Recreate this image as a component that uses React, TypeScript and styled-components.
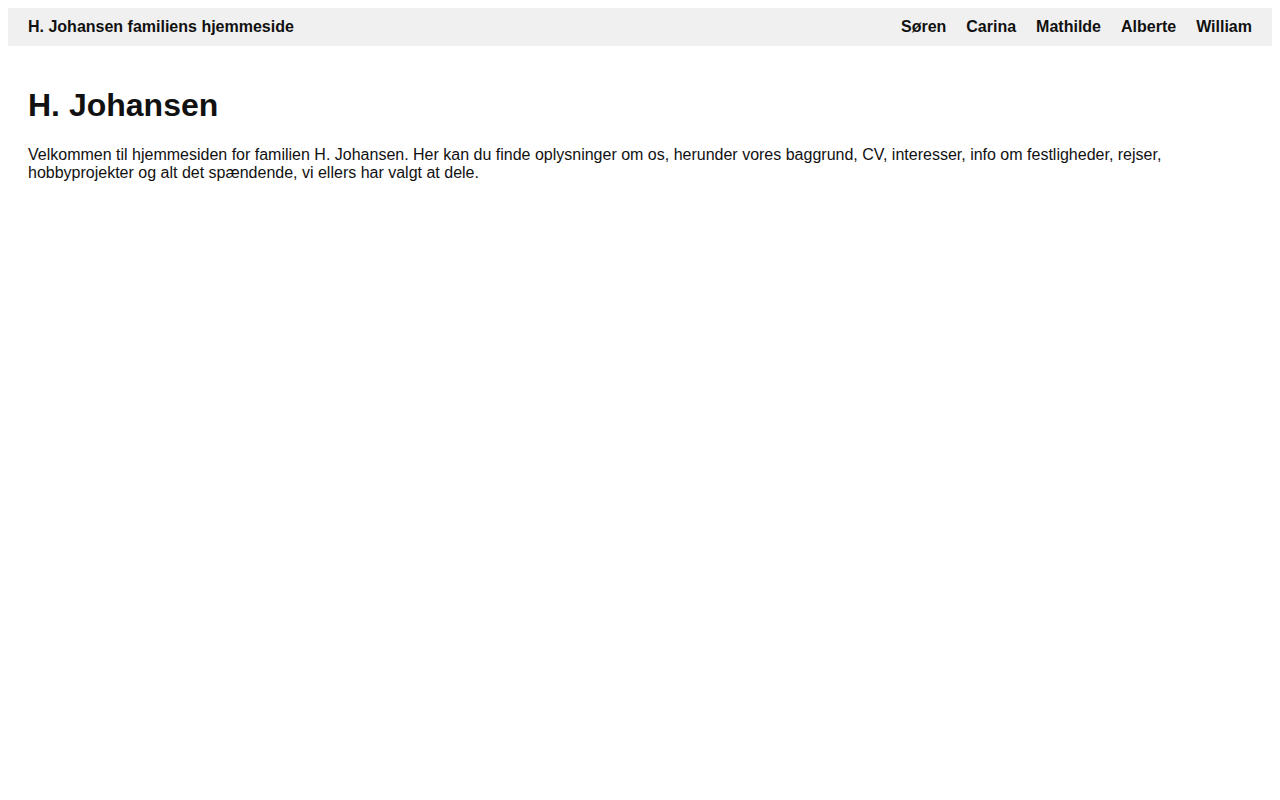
import React from 'react';
import styled, { createGlobalStyle } from 'styled-components';

const GlobalStyle = createGlobalStyle`
  body {
    margin: 8px;
    font-family: "Liberation Sans", Arial, sans-serif;
    color: #111;
    background: #fff;
  }
`;

const TopBar = styled.header`
  display: flex;
  align-items: center;
  justify-content: space-between;
  background: #f0f0f0;
  padding: 10px 20px;
`;

const SiteTitle = styled.span`
  font-weight: bold;
  font-size: 16px;
`;

const Nav = styled.nav`
  display: flex;
  gap: 20px;
`;

const NavLink = styled.a`
  font-weight: bold;
  font-size: 16px;
  color: #111;
  text-decoration: none;
`;

const Main = styled.main`
  padding: 20px;
`;

const Heading = styled.h1`
  font-size: 32px;
  margin: 21.44px 0;
`;

const Intro = styled.p`
  font-size: 16px;
  margin: 16px 0;
`;

const members = ['Søren', 'Carina', 'Mathilde', 'Alberte', 'William'];

export default function App() {
  return (
    <>
      <GlobalStyle />
      <TopBar>
        <SiteTitle>H. Johansen familiens hjemmeside</SiteTitle>
        <Nav>
          {members.map((m) => (
            <NavLink key={m} href="#">{m}</NavLink>
          ))}
        </Nav>
      </TopBar>
      <Main>
        <Heading>H. Johansen</Heading>
        <Intro>
          Velkommen til hjemmesiden for familien H. Johansen. Her kan du finde oplysninger om os, herunder vores baggrund, CV, interesser, info om festligheder, rejser, hobbyprojekter og alt det spændende, vi ellers har valgt at dele.
        </Intro>
      </Main>
    </>
  );
}
